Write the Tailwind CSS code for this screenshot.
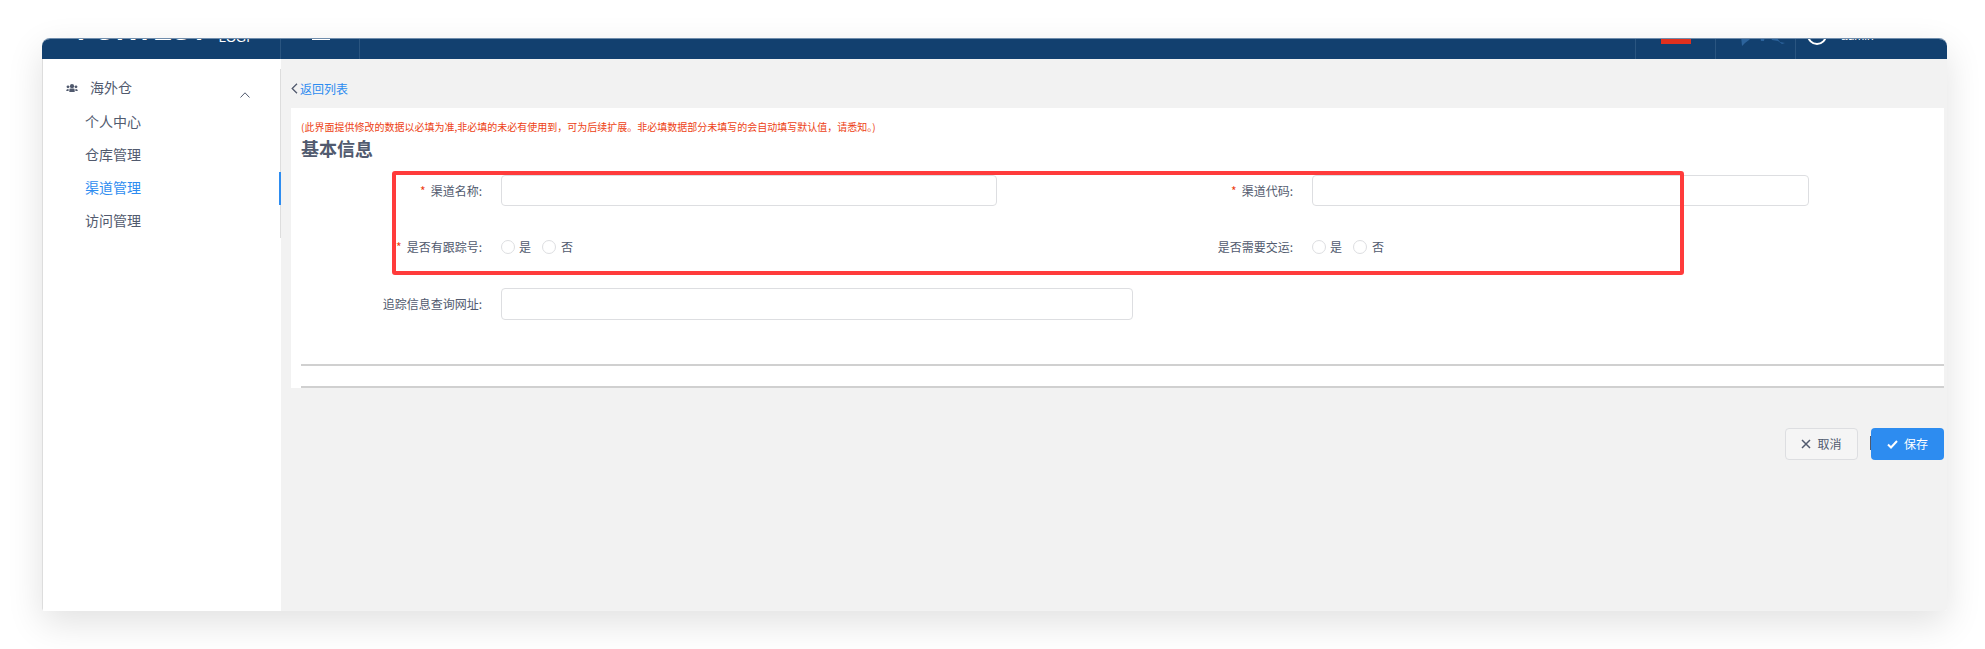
<!DOCTYPE html>
<html lang="en">
<head>
  <meta charset="UTF-8" />
  <title>渠道管理</title>
  <script src="https://cdn.jsdelivr.net/npm/@tailwindcss/browser@4"></script>
</head>
<body class="bg-white font-['Noto_Sans_CJK_SC','Liberation_Sans',sans-serif] text-[#515a6e]">
  <div class="w-[1985px] h-[649px] pl-[42px] pt-[38px] overflow-hidden">
    <div class="w-[1905px] h-[573px] rounded-t-[8px] rounded-b-[3px] shadow-[0_12px_36px_rgba(0,0,0,0.12)]">
      <div class="h-full rounded-[inherit] overflow-hidden flex flex-col border-t border-[#6f8cab]">

        <!-- Header, scrolled up so only its lower part shows -->
        <header class="shrink-0 -mt-[40px] h-[60px] bg-[#12406f] flex text-white">
          <div class="w-[239px] border-r border-[#2a5580] flex items-end pl-[35px] pb-[14px] gap-[11px]">
            <span class="text-[28px] leading-none font-bold font-['Liberation_Sans']">FORTEST</span>
            <span class="text-[13px] leading-none pb-[1px] font-['Liberation_Sans']">LOGI</span>
          </div>
          <div class="w-[79px] border-r border-[#2a5580] pl-[31px] pt-[25px]">
            <div class="w-[18px] flex flex-col gap-[5px]">
              <div class="h-[2px] bg-white"></div>
              <div class="h-[2px] bg-white"></div>
              <div class="h-[2px] bg-white"></div>
            </div>
          </div>
          <div class="flex-1"></div>
          <div class="w-[80px] border-l border-[#2a5580] flex items-end justify-center pb-[15px]">
            <div class="w-[30px] h-[20px] bg-[#e0301e]"></div>
          </div>
          <div class="w-[80px] border-l border-[#2a5580] flex items-end pl-[24px] pb-[11px]">
            <svg width="46" height="12" viewBox="0 0 46 12" fill="#2c639c">
              <path d="M1 0h12l-4 4-4 3-3 3zM20 0h5l-1 5h-3zM31 2h6l3 4 5 1-3 1-4-3-6-1z" />
            </svg>
          </div>
          <div class="w-[152px] border-l border-[#2a5580] flex items-end pl-[11px] pb-[14px] gap-[14px]">
            <div class="w-[20px] h-[20px] rounded-full border-2 border-white"></div>
            <span class="text-[12px] leading-none pb-[3px] font-['Liberation_Sans']">admin</span>
          </div>
        </header>

        <div class="flex-1 flex min-h-0">
          <!-- Sidebar -->
          <aside class="w-[239px] shrink-0 bg-white border-l border-[#ddd] pt-[10px]">
            <div class="border-r border-[#ddd] text-[14px]">
              <div class="h-[37px] flex items-center pl-[23px]">
                <svg class="w-[12px] h-[8px]" viewBox="0 0 13 9" fill="#515a6e">
                  <circle cx="6.5" cy="2.400" r="2.400" />
                  <circle cx="2" cy="3.200" r="1.600" />
                  <circle cx="11" cy="3.200" r="1.600" />
                  <path d="M3.500 9V6.500Q3.500 5 5 5h3q1.500 0 1.500 1.500V9zM0 7.500Q0 5.500 2 5.500l.7.3V8H0zM13 7.500Q13 5.500 11 5.500l-.7.3V8H13z" />
                </svg>
                <span class="ml-[12px]">海外仓</span>
                <svg class="ml-[108px] mt-[14px] w-[10px] h-[6px]" viewBox="0 0 10 6" fill="none" stroke="#515a6e">
                  <path d="M.5 5.500 5 .8l4.500 4.700" />
                </svg>
              </div>
              <div class="h-[33px] pb-[2px] flex items-center pl-[42px]">个人中心</div>
              <div class="h-[33px] pb-[2px] flex items-center pl-[42px]">仓库管理</div>
              <div class="h-[33px] pb-[2px] flex items-center pl-[42px] -mr-px border-r-2 border-[#2d8cf0] text-[#2d8cf0]">渠道管理</div>
              <div class="h-[33px] pb-[2px] flex items-center pl-[42px]">访问管理</div>
            </div>
          </aside>

          <!-- Content -->
          <main class="flex-1 bg-[#f2f2f2] pl-[10px] pr-[3px]">
            <a class="h-[49px] pt-[10px] flex items-center text-[12px] text-[#2d8cf0]">
              <svg class="w-[7px] h-[11px] mr-[2px]" viewBox="0 0 7 11" fill="none" stroke="#515a6e" stroke-width="1.300">
                <path d="M6 .7 1.200 5.500 6 10.300" />
              </svg>
              返回列表
            </a>

            <section class="h-[280px] bg-white pl-[10px] pt-[12px]">
              <p class="text-[10px] leading-[14px] text-[#ed3f14] whitespace-nowrap">(此界面提供修改的数据以必填为准,非必填的未必有使用到，可为后续扩展。非必填数据部分未填写的会自动填写默认值，请悉知。)</p>
              <h2 class="text-[18px] leading-[26px] font-bold mt-[1px]">基本信息</h2>

              <div class="relative mt-[14px] text-[12px]">
                <!-- Red annotation box drawn over the form -->
                <div class="absolute left-[91px] top-[-4px] w-[1292px] h-[104px] border-4 border-[#ff3b3b] rounded-[3px]"></div>

                <div class="flex h-[65px]">
                  <div class="w-[811px] flex items-start">
                    <label class="w-[181px] h-[31px] flex items-center justify-end whitespace-nowrap"><span class="text-[#ed3f14] mr-[5px]">*</span>渠道名称:</label>
                    <input class="ml-[19px] w-[496px] h-[31px] rounded-[4px] border border-[#dddee1] bg-white" />
                  </div>
                  <div class="w-[811px] flex items-start">
                    <label class="w-[181px] h-[31px] flex items-center justify-end whitespace-nowrap"><span class="text-[#ed3f14] mr-[5px]">*</span>渠道代码:</label>
                    <input class="ml-[19px] w-[497px] h-[31px] rounded-[4px] border border-[#dddee1] bg-white" />
                  </div>
                </div>

                <div class="flex h-[48px]">
                  <div class="w-[811px] flex items-start">
                    <label class="w-[181px] h-[14px] flex items-center justify-end whitespace-nowrap"><span class="text-[#ed3f14] mr-[5px]">*</span>是否有跟踪号:</label>
                    <div class="ml-[19px] flex items-center h-[14px]">
                      <span class="w-[14px] h-[14px] rounded-full border border-[#dddee1]"></span><span class="ml-[4px]">是</span>
                      <span class="ml-[11px] w-[14px] h-[14px] rounded-full border border-[#dddee1]"></span><span class="ml-[5px]">否</span>
                    </div>
                  </div>
                  <div class="w-[811px] flex items-start">
                    <label class="w-[181px] h-[14px] flex items-center justify-end whitespace-nowrap">是否需要交运:</label>
                    <div class="ml-[19px] flex items-center h-[14px]">
                      <span class="w-[14px] h-[14px] rounded-full border border-[#dddee1]"></span><span class="ml-[4px]">是</span>
                      <span class="ml-[11px] w-[14px] h-[14px] rounded-full border border-[#dddee1]"></span><span class="ml-[5px]">否</span>
                    </div>
                  </div>
                </div>

                <div class="flex">
                  <label class="w-[181px] h-[32px] flex items-center justify-end whitespace-nowrap">追踪信息查询网址:</label>
                  <input class="ml-[19px] w-[632px] h-[32px] rounded-[4px] border border-[#dddee1] bg-white" />
                </div>
              </div>

              <div class="mt-[44px] h-[2px] bg-[#d0d0d0]"></div>
              <div class="mt-[20px] h-[2px] bg-[#d0d0d0]"></div>
            </section>

            <div class="mt-[40px] flex justify-end">
              <button class="w-[73px] h-[32px] rounded-[4px] border border-[#dddee1] bg-[#f5f5f5] text-[12px] flex items-center justify-center gap-[6px]">
                <svg class="w-[10px] h-[10px]" viewBox="0 0 10 10" fill="none" stroke="#515a6e" stroke-width="1.500">
                  <path d="M1 1l8 8M9 1l-8 8" />
                </svg>
                取消
              </button>
              <span class="ml-[12px] mt-[8px] w-px h-[14px] bg-[#515a6e]"></span>
              <button class="w-[73px] h-[32px] rounded-[4px] bg-[#2d8cf0] text-white text-[12px] flex items-center justify-center gap-[6px]">
                <svg class="w-[11px] h-[9px]" viewBox="0 0 11 9" fill="none" stroke="#fff" stroke-width="2">
                  <path d="M1 4.500 4 7.500 10 1" />
                </svg>
                保存
              </button>
            </div>
          </main>
        </div>
      </div>
    </div>
  </div>
</body>
</html>
